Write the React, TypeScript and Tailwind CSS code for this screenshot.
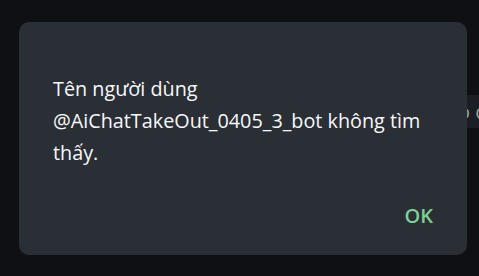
import React from "react";

export default function App() {
  return (
    <div className="relative w-[479px] h-[276px] overflow-hidden bg-[#0e1013]" style={{ fontFamily: '"Open Sans", "Noto Sans", sans-serif' }}>
      <div className="absolute left-[440px] top-[95px] w-[60px] h-[33px] bg-[#1b1e22] flex items-center pl-[18px] text-[20px] text-[#9aa0a6] whitespace-nowrap">
        o c
      </div>
      <div className="absolute left-[19px] top-[22px] w-[448px] h-[233px] rounded-[10px] bg-[#2a2e35] flex flex-col">
        <div className="pl-[34px] pr-[30px] pt-[51px] text-[19.8px] leading-[32px] text-[#f7f8f9]">
          Tên người dùng @AiChatTakeOut_0405_3_bot không tìm thấy.
        </div>
        <div className="mt-auto flex justify-end pr-[34px] pb-[27px]">
          <span className="text-[20px] font-semibold text-[#7cd292] leading-[24px]">OK</span>
        </div>
      </div>
    </div>
  );
}
